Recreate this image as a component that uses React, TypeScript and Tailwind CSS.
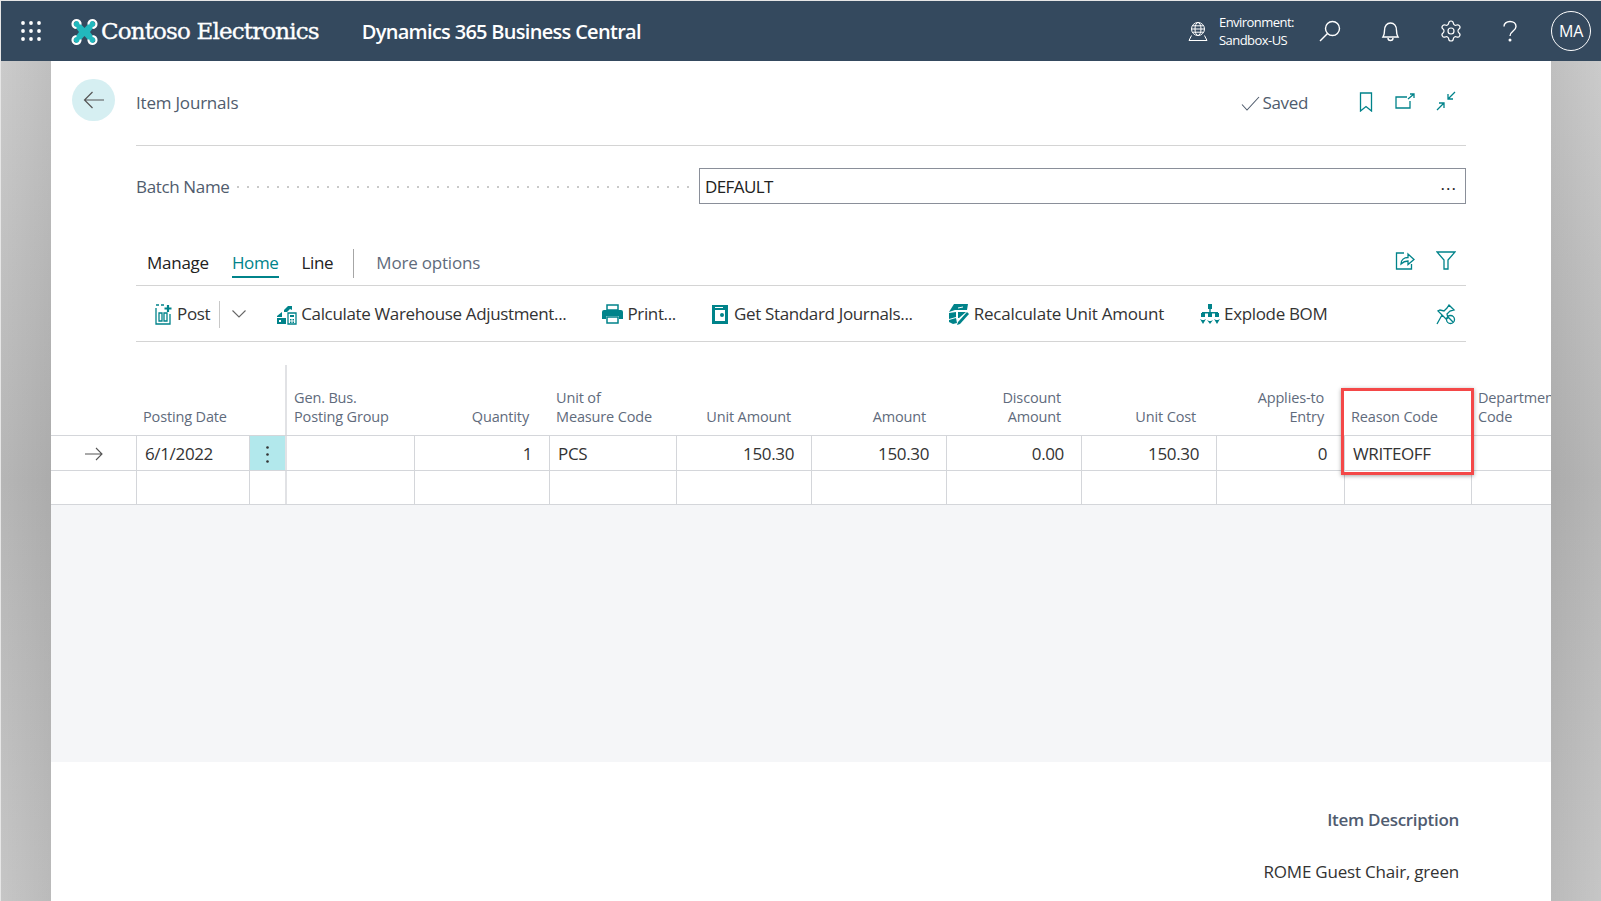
import { ReactNode } from 'react'
import { Settings } from 'lucide-react'

const teal = '#00838a'

function Topbar() {
  return (
    <div className="flex h-[60px] items-center bg-[#34495e] text-white">
      <svg className="ml-[20px] h-[20px] w-[20px]" viewBox="0 0 20 20" fill="#fff">
        {[2, 10, 18].map((y) => [2, 10, 18].map((x) => <circle key={`${x}-${y}`} cx={x} cy={y} r="1.9" />))}
      </svg>
      <svg className="ml-[30px] mt-[1px] h-[30px] w-[27px]" viewBox="0 0 27 30">
        <path d="M6 3l7.5 8L21 3l4 4-6 8 6 8-4 4-7.5-8L6 27l-4-4 6-8-6-8z" fill="#22b8bd" />
        <g fill="none" stroke="#fff" strokeWidth="2.2">
          <path d="M9.5 7.5A4 4 0 1 0 5.5 11" />
          <path d="M17.5 7.5A4 4 0 1 1 21.5 11" />
          <path d="M9.5 22.5A4 4 0 1 1 5.5 19" />
          <path d="M17.5 22.5A4 4 0 1 0 21.5 19" />
        </g>
      </svg>
      <span className="ml-[3px] mt-[1px] font-['DejaVu_Serif',serif] text-[23px] tracking-[-0.85px] [-webkit-text-stroke:0.35px_white]">Contoso Electronics</span>
      <span className="ml-[43px] mt-[1px] text-[20px] font-semibold tracking-[-0.7px]">Dynamics 365 Business Central</span>
      <div className="ml-auto flex items-center">
        <svg className="h-[20px] w-[20px]" viewBox="0 0 20 20" fill="none" stroke="#fff" strokeWidth="1">
          <circle cx="10" cy="8" r="6.5" />
          <ellipse cx="10" cy="8" rx="3" ry="6.5" />
          <path d="M3.5 8h13M4.5 4.8h11M4.5 11.2h11M3.5 14.5L1 19.5h18l-2.5-5" />
        </svg>
        <div className="ml-[11px] w-[78px] text-[13px] leading-[18px] tracking-[-0.55px]">
          <div>Environment:</div>
          <div>Sandbox-US</div>
        </div>
        <svg className="ml-[22px] h-[22px] w-[22px]" viewBox="0 0 22 22" fill="none" stroke="#fff" strokeWidth="1.4">
          <circle cx="13.5" cy="8.5" r="7" />
          <path d="M8.5 13.5L1 21" />
        </svg>
        <svg className="ml-[40px] h-[21px] w-[19px]" viewBox="0 0 19 21" fill="none" stroke="#fff" strokeWidth="1.4">
          <path d="M2 16c1-1.5 1.5-3 1.5-6.500C3.500 5 6 2 9.500 2s6 3 6 7.500c0 3.500.5 5 1.500 6.500z" />
          <path d="M7 17a2.500 2.500 0 0 0 5 0" />
        </svg>
        <Settings className="ml-[39px] h-[24px] w-[24px]" strokeWidth={1.2} />
        <svg className="ml-[39px] h-[22px] w-[16px]" viewBox="0 0 16 22" fill="none" stroke="#fff" strokeWidth="1.4">
          <path d="M2 6.500C2 3.500 4.500 1.500 8 1.500s6 2 6 5c0 4.500-6 4.500-6 9.500" />
          <circle cx="8" cy="20" r=".8" fill="#fff" />
        </svg>
        <div className="ml-[33px] mr-[10px] flex h-[40px] w-[40px] items-center justify-center rounded-full border border-white text-[16px]">MA</div>
      </div>
    </div>
  )
}

const gutterClass = 'w-[50px] bg-[linear-gradient(to_right,transparent,rgba(0,0,0,0.06)),linear-gradient(to_bottom,#cbcbcb,#b6b6b6_50%,#c6c6c6)]'

function TealIcon({ w, h, className, children }: { w: number; h: number; className?: string; children: ReactNode }) {
  return (
    <svg width={w} height={h} viewBox={`0 0 ${w} ${h}`} fill="none" stroke={teal} strokeWidth="1.3" className={className}>
      {children}
    </svg>
  )
}

function TitleRow() {
  return (
    <div className="flex h-[84px] items-center pl-[21px] pr-[95px]">
      <div className="-mt-[6px] flex h-[42px] w-[43px] items-center justify-center rounded-full bg-[#d6eff2]">
        <svg width="22" height="18" viewBox="0 0 22 18" fill="none" stroke="#555" strokeWidth="1.2">
          <path d="M21 9H1.500M9.500 1L1.500 9l8 8" />
        </svg>
      </div>
      <span className="ml-[21px] tracking-[-0.2px] text-[#505c6d]">Item Journals</span>
      <svg className="ml-auto" width="19" height="15" viewBox="0 0 19 15" fill="none" stroke="#505c6d" strokeWidth="1.1">
        <path d="M1 8.500L6 14 18 1" />
      </svg>
      <span className="ml-[3px] text-[#505c6d]">Saved</span>
      <TealIcon w={14} h={20} className="ml-[51px] -mt-[3px]">
        <path d="M1.500 1h11v18L7 14.500 1.500 19z" />
      </TealIcon>
      <TealIcon w={20} h={16} className="ml-[22px] -mt-[5px]">
        <path d="M12 4H1v11h14V8M13 6l6-5M15 1h4v4" />
      </TealIcon>
      <TealIcon w={20} h={20} className="ml-[21px] -mt-[4px]">
        <path d="M19 1l-7 7M12 3v5h5M1 19l7-7M3 12h5v5" />
      </TealIcon>
    </div>
  )
}

function BatchRow() {
  return (
    <div className="mx-[85px] mt-[22px] flex h-[36px] items-center">
      <div className="flex w-[563px] items-center pt-[2px]">
        <span className="text-[#505c6d]">Batch Name</span>
        <div className="ml-[3px] mr-[4px] h-[10px] flex-1 bg-[radial-gradient(circle,#c9c9c9_1px,transparent_1.5px)] bg-[length:10px_10px]" />
      </div>
      <div className="flex h-full flex-1 items-center justify-between border border-[#8a8f99] pl-[5px] pr-[8px] pt-[2px] tracking-[-0.6px] text-[#212121]">
        <span>DEFAULT</span>
        <span className="mb-[8px] leading-none tracking-[1px]">...</span>
      </div>
    </div>
  )
}

function TabsRow() {
  return (
    <div className="mx-[85px] mt-[39px] flex h-[43px] items-center border-b border-[#d4d4d4] pb-[2px] pl-[11px]">
      <span className="tracking-[-0.25px] text-[#212121]">Manage</span>
      <span className="ml-[23px] mt-[2px] border-b-2 border-[#00838a] text-[#00838a]">Home</span>
      <span className="ml-[23px] text-[#212121]">Line</span>
      <div className="ml-[20px] h-[29px] w-px bg-[#a6a6a6]" />
      <span className="ml-[22px] tracking-[-0.2px] text-[#5f6b7c]">More options</span>
      <TealIcon w={20} h={19} className="ml-auto -mt-[5px]">
        <path d="M9 2H1.500v16h15v-5" />
        <path d="M6 13c0-4 3-6.500 7-6.500V3l6 5.500-6 5V10c-3 0-5 1-7 3z" />
      </TealIcon>
      <TealIcon w={20} h={19} className="ml-[21px] mr-[10px] -mt-[5px]">
        <path d="M1 1h18l-7 8v9H8V9z" />
      </TealIcon>
    </div>
  )
}

function ActionItem({ icon, label, className, labelClass = 'ml-[5px]' }: { icon: ReactNode; label: string; className: string; labelClass?: string }) {
  return (
    <div className={`flex items-center ${className}`}>
      {icon}
      <span className={`${labelClass} text-[#333]`}>{label}</span>
    </div>
  )
}

function ActionsRow() {
  return (
    <div className="mx-[85px] flex h-[56px] items-center border-b border-[#d4d4d4] pl-[18px] pt-[1px]">
      <TealIcon w={19} h={21}>
        <path d="M2 4v16h14V10M5 9v8h3V9zM10 9v8h3V9zM2 1h3M7 1h3" />
        <path d="M14 1v7M10.500 4.500h7" strokeWidth="2.200" />
      </TealIcon>
      <span className="ml-[4px] text-[#333]">Post</span>
      <div className="ml-[9px] h-[27px] w-px bg-[#c8c8c8]" />
      <svg className="ml-[12px]" width="14" height="8" viewBox="0 0 14 8" fill="none" stroke="#666" strokeWidth="1.100">
        <path d="M.5.5L7 7 13.500.5" />
      </svg>
      <ActionItem
        className="ml-[31px]"
        labelClass="ml-[4px]"
        label="Calculate Warehouse Adjustment..."
        icon={
          <svg width="20" height="21" viewBox="0 0 20 21" fill={teal}>
            <path d="M0 12l5-4v5H0zM0 14h9v6H0zM2 16v2h2v-2zM7 6l4-4h4v4l-2-1-3 3H7z" />
            <path d="M11 9h8v11h-8z" fill="none" stroke={teal} strokeWidth="1.300" />
            <path d="M13 11h4v2h-4zM13 15h1.500v1.500H13zM15.500 15H17v1.500h-1.500zM13 17.500h1.500V19H13zM15.500 17.500H17V19h-1.500z" />
          </svg>
        }
      />
      <ActionItem
        className="ml-[36px]"
        labelClass="ml-[4px]"
        label="Print..."
        icon={
          <svg width="21" height="20" viewBox="0 0 21 20" fill={teal}>
            <path d="M5 1h11v5H5z" fill="none" stroke={teal} strokeWidth="1.500" />
            <path d="M2 6h17a2 2 0 0 1 2 2v7h-4v-3H4v3H0V8a2 2 0 0 1 2-2z" />
            <path d="M5 13h11v6H5z" fill="none" stroke={teal} strokeWidth="1.500" />
          </svg>
        }
      />
      <ActionItem
        className="ml-[36px]"
        labelClass="ml-[4px]"
        label="Get Standard Journals..."
        icon={
          <svg className="mr-[2px]" width="16" height="19" viewBox="0 0 16 19" fill={teal}>
            <path fillRule="evenodd" d="M0 0h16v19H0zM3 5v11h10V5zM11 2H3v1h8z" />
            <circle cx="10" cy="10" r="2" />
          </svg>
        }
      />
      <ActionItem
        className="ml-[36px]"
        labelClass="ml-[5px] tracking-[-0.22px]"
        label="Recalculate Unit Amount"
        icon={
          <svg width="20" height="21" viewBox="0 0 20 21" fill={teal}>
            <path d="M5 0h14l-1 6H6L0 8z" />
            <path d="M0 9l7-1v5l-7 2zM9 8h8l-7 6H9zM0 16l7-2 1 5-4 1-4-2z" />
            <path d="M18 8l2 2-9 10-3 1 1-3z" />
            <path d="M9 4l5-1" stroke="#fff" strokeWidth="1" />
          </svg>
        }
      />
      <ActionItem
        className="ml-[36px]"
        labelClass="ml-[5px]"
        label="Explode BOM"
        icon={
          <svg className="mr-[-1px]" width="20" height="21" viewBox="0 0 20 21" fill={teal}>
            <path d="M8 0h4v5H8zM2 8h16v1.500H2zM9.300 5h1.400v3H9.300zM1 9h4v4H1zM15 9h4v4h-4zM8 9h4v4H8z" />
            <path d="M0 15l3 5 3-5-2 1h-2zM7 16l3 4 3-4-2 1H9zM14 15l3 5 3-5-2 1h-2z" />
          </svg>
        }
      />
      <TealIcon w={20} h={21} className="ml-auto mr-[10px]">
        <path d="M13 1l5 5-4 1-3 3 1 4-2 1-8-8 2-1 4 1 3-3zM6 11l-5 9" />
        <circle cx="14.500" cy="15.500" r="4" />
        <path d="M11.800 12.800l5.400 5.400" />
      </TealIcon>
    </div>
  )
}

const colWidths = 'grid-cols-[85px_113px_36px_129px_135px_127px_135px_135px_135px_135px_128px_127px_80px]'

const headers: { label: ReactNode; right?: boolean }[] = [
  { label: '' },
  { label: 'Posting Date' },
  { label: '' },
  { label: <>Gen. Bus.<br />Posting Group</> },
  { label: 'Quantity', right: true },
  { label: <>Unit of<br />Measure Code</> },
  { label: 'Unit Amount', right: true },
  { label: 'Amount', right: true },
  { label: <>Discount<br />Amount</>, right: true },
  { label: 'Unit Cost', right: true },
  { label: <>Applies-to<br />Entry</>, right: true },
  { label: 'Reason Code' },
  { label: <>Department<br />Code</> },
]

const row: { text: string; right?: boolean }[] = [
  { text: '' },
  { text: '6/1/2022' },
  { text: '' },
  { text: '' },
  { text: '1', right: true },
  { text: 'PCS' },
  { text: '150.30', right: true },
  { text: '150.30', right: true },
  { text: '0.00', right: true },
  { text: '150.30', right: true },
  { text: '0', right: true },
  { text: 'WRITEOFF' },
  { text: '' },
]

function JournalGrid() {
  return (
    <div className="relative mt-[23px]">
      {/* frozen column edge */}
      <div className={`grid h-[71px] ${colWidths} border-b border-[#d4d6da] text-[14.500px] leading-[19px] tracking-[-0.15px] text-[#5f6b7c]`}>
        {headers.map((h, i) => (
          <div
            key={i}
            className={`flex flex-col justify-end whitespace-nowrap pb-[9px] ${h.right ? 'items-end pr-[20px] text-right' : 'pl-[7px]'} ${i === 3 ? 'border-l-2 border-[#e1e2e5]' : ''}`}
          >
            <div>{h.label}</div>
          </div>
        ))}
      </div>
      <div className={`grid h-[35px] ${colWidths} border-b border-[#d4d6da] text-[#333]`}>
        {row.map((c, i) => (
          <div
            key={i}
            className={`flex items-center whitespace-nowrap pt-[2px] ${i > 0 ? 'border-l border-[#d4d6da]' : ''} ${i === 3 ? 'border-l-2 border-[#e1e2e5]' : ''} ${c.right ? 'justify-end pr-[17px]' : 'pl-[8px]'} ${i === 2 ? 'justify-center bg-[#b2e8ec] !pl-0' : ''}`}
          >
            {i === 0 && (
              <svg className="ml-[26px]" width="18" height="14" viewBox="0 0 18 14" fill="none" stroke="#555" strokeWidth="1.100">
                <path d="M0 7h17M11 1l6 6-6 6" />
              </svg>
            )}
            {i === 2 && (
              <svg width="3" height="17" viewBox="0 0 3 17" fill="#333">
                <circle cx="1.500" cy="1.500" r="1.300" />
                <circle cx="1.500" cy="8.500" r="1.300" />
                <circle cx="1.500" cy="15.500" r="1.300" />
              </svg>
            )}
            {c.text}
          </div>
        ))}
      </div>
      <div className={`grid h-[34px] ${colWidths} border-b border-[#d4d6da]`}>
        {row.map((_, i) => (
          <div key={i} className={`${i > 0 ? 'border-l border-[#d4d6da]' : ''} ${i === 3 ? 'border-l-2 border-[#e1e2e5]' : ''}`} />
        ))}
      </div>
      {/* red callout drawn over the Reason Code column */}
      <div className="absolute left-[1290px] top-[23px] h-[87px] w-[133px] border-[3px] border-[#f44848] shadow-[0_1px_4px_rgba(0,0,0,0.35)]" />
    </div>
  )
}

export default function App() {
  return (
    <div className="flex h-[901px] w-[1601px] flex-col overflow-hidden bg-[#e6e6e6] pl-px pt-px font-['Open_Sans',sans-serif] text-[17px] tracking-[-0.35px]">
      <Topbar />
      <div className="flex min-h-0 flex-1">
        <div className={gutterClass} />
        <main className="flex w-[1500px] flex-col overflow-hidden bg-white">
          <TitleRow />
          <div className="mx-[85px] h-px bg-[#d4d4d4]" />
          <BatchRow />
          <TabsRow />
          <ActionsRow />
          <JournalGrid />
          <div className="h-[257px] bg-[#f5f6f8]" />
          <div className="flex flex-col items-end pr-[92px]">
            <div className="mt-[45px] text-[17px] font-semibold tracking-[-0.3px] text-[#505c70]">Item Description</div>
            <div className="mt-[26px] tracking-[-0.2px] text-[#333]">ROME Guest Chair, green</div>
          </div>
        </main>
        <div className={`${gutterClass} -scale-x-100`} />
      </div>
    </div>
  )
}
